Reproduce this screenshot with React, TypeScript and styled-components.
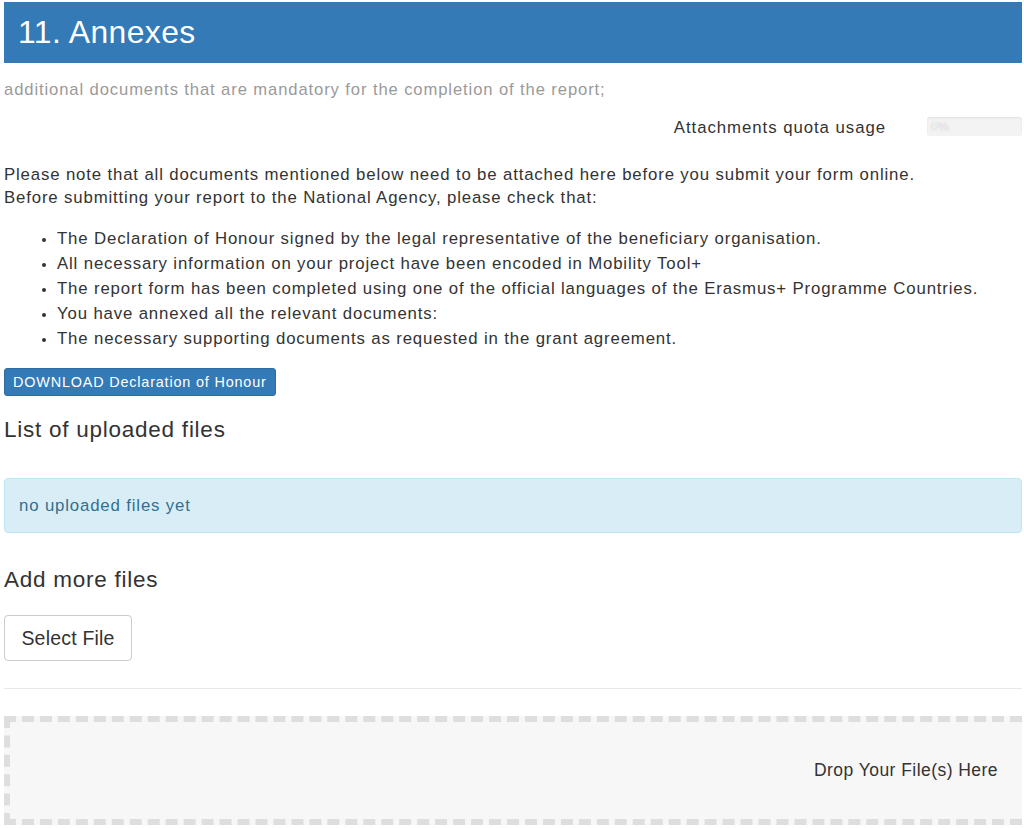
import React from "react";
import styled, { createGlobalStyle } from "styled-components";

const Global = createGlobalStyle`
  html, body { margin: 0; padding: 0; background: #fff; }
  body { font-family: "Liberation Sans", Arial, sans-serif; color: #333; letter-spacing: 0.85px; }
`;

const Page = styled.div`
  width: 1018px;
  padding: 2px 0 0 4px;
  display: flex;
  flex-direction: column;

  & > * {
    flex-shrink: 0;
  }
`;

const Header = styled.h2`
  margin: 0;
  height: 61px;
  line-height: 61px;
  padding: 0 14px;
  background: #337ab7;
  color: #fff;
  font-size: 31.8px;
  font-weight: 400;
  letter-spacing: 0.45px;
`;

const Subtitle = styled.p`
  margin: 15px 0 0;
  line-height: 24px;
  font-size: 16.6px;
  color: #9a9a9a;
  letter-spacing: 0.9px;
`;

const QuotaRow = styled.div`
  margin-top: 14px;
  display: flex;
  justify-content: flex-end;
  align-items: center;
  gap: 41px;
  height: 24px;
`;

const QuotaLabel = styled.span`
  font-size: 16.8px;
  color: #333;
  line-height: 24px;
  letter-spacing: 0.95px;
`;

const QuotaBar = styled.div`
  width: 95px;
  height: 19px;
  margin-top: -3px;
  background: #f3f3f3;
  border-radius: 3px;
  box-shadow: inset 0 1px 2px rgba(0, 0, 0, 0.08);
  display: flex;
  align-items: center;
  padding-left: 4px;
  box-sizing: border-box;
  font-size: 12.5px;
  letter-spacing: 0;
  color: #fafafa;
  text-shadow: 0 0 1px #aaa;
`;

const Para = styled.p`
  margin: 23px 0 0;
  line-height: 23px;
  font-size: 16.8px;
`;

const Checklist = styled.ul`
  margin: 17px 0 0;
  padding-left: 53px;
  line-height: 25px;
  font-size: 16.8px;

  li::marker {
    font-size: 13px;
  }
`;

const PrimaryButton = styled.button`
  align-self: flex-start;
  margin-top: 17px;
  height: 28px;
  padding: 0 8px;
  background: #337ab7;
  border: 1px solid #2e6da4;
  border-radius: 3px;
  color: #fff;
  font-family: inherit;
  font-size: 14.4px;
  letter-spacing: 0.83px;
`;

const SectionTitle = styled.h3<{ $top: number }>`
  margin: ${(p) => p.$top}px 0 0;
  font-size: 22.5px;
  font-weight: 400;
  line-height: 30px;
  color: #333;
  letter-spacing: 0.75px;
`;

const InfoAlert = styled.div`
  margin-top: 33px;
  height: 55px;
  box-sizing: border-box;
  padding: 0 14px;
  display: flex;
  align-items: center;
  background: #d9edf7;
  border: 1px solid #bce8f1;
  border-radius: 4px;
  color: #31708f;
  font-size: 16.8px;
`;

const DefaultButton = styled.button`
  align-self: flex-start;
  margin-top: 20px;
  width: 128px;
  height: 46px;
  background: #fff;
  border: 1px solid #ccc;
  border-radius: 4px;
  color: #333;
  font-family: inherit;
  font-size: 19.5px;
  letter-spacing: 0.2px;
`;

const Divider = styled.hr`
  margin: 27px 0 0;
  border: 0;
  border-top: 1px solid #e8e8e8;
  height: 0;
`;

const DropZone = styled.div`
  margin-top: 27px;
  height: 109px;
  box-sizing: border-box;
  background: #f7f7f7;
  border: 6px dashed #dedede;
  border-right: none;
  display: flex;
  align-items: center;
  justify-content: flex-end;
  padding-right: 24px;
  font-size: 17.5px;
  letter-spacing: 0.45px;
  color: #333;
`;

export default function App() {
  return (
    <>
      <Global />
      <Page>
        <Header>11. Annexes</Header>
        <Subtitle>additional documents that are mandatory for the completion of the report;</Subtitle>
        <QuotaRow>
          <QuotaLabel>Attachments quota usage</QuotaLabel>
          <QuotaBar>0%</QuotaBar>
        </QuotaRow>
        <Para>
          Please note that all documents mentioned below need to be attached here before you submit your form online.
          <br />
          Before submitting your report to the National Agency, please check that:
        </Para>
        <Checklist>
          <li>The Declaration of Honour signed by the legal representative of the beneficiary organisation.</li>
          <li>All necessary information on your project have been encoded in Mobility Tool+</li>
          <li>The report form has been completed using one of the official languages of the Erasmus+ Programme Countries.</li>
          <li>You have annexed all the relevant documents:</li>
          <li>The necessary supporting documents as requested in the grant agreement.</li>
        </Checklist>
        <PrimaryButton>DOWNLOAD Declaration of Honour</PrimaryButton>
        <SectionTitle $top={19}>List of uploaded files</SectionTitle>
        <InfoAlert>no uploaded files yet</InfoAlert>
        <SectionTitle $top={32}>Add more files</SectionTitle>
        <DefaultButton>Select File</DefaultButton>
        <Divider />
        <DropZone>Drop Your File(s) Here</DropZone>
      </Page>
    </>
  );
}
